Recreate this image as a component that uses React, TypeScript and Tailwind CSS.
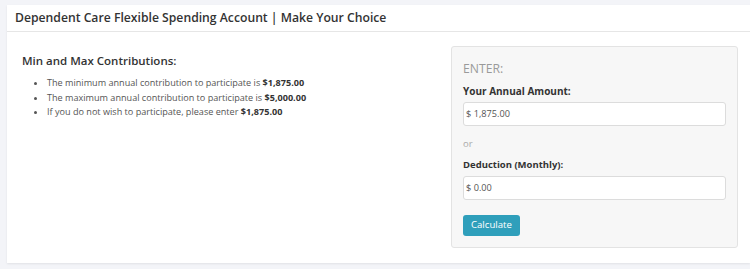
export default function App() {
  const rules = [
    { text: "The minimum annual contribution to participate is ", amount: "$1,875.00" },
    { text: "The maximum annual contribution to participate is ", amount: "$5,000.00" },
    { text: "If you do not wish to participate, please enter ", amount: "$1,875.00" },
  ];

  return (
    <div
      className="h-[269px] w-[750px] bg-[#f3f4f8] pl-[7px] pt-[5px] text-[#333]"
      style={{ fontFamily: '"Open Sans", "Liberation Sans", sans-serif' }}
    >
      <div className="h-[258px] bg-white shadow-[0_1px_2px_rgba(0,0,0,0.08)]">
        {/* header */}
        <div className="flex h-[27px] items-center border-b border-[#e6e6e6] pl-[8px]">
          <h1 className="text-[12.2px] font-semibold text-[#333]">
            Dependent Care Flexible Spending Account | Make Your Choice
          </h1>
        </div>

        <div className="flex pt-[14px]">
          {/* left column */}
          <div className="w-[444px] pl-[15px]">
            <h2 className="mt-[7px] text-[11.5px] font-semibold leading-[16px] text-[#333]">
              Min and Max Contributions:
            </h2>
            <ul className="mt-[7px] list-disc pl-[25px] text-[9.1px] leading-[14.5px] text-[#555]">
              {rules.map((r) => (
                <li key={r.amount + r.text}>
                  {r.text}
                  <span className="font-bold text-[#333]">{r.amount}</span>
                </li>
              ))}
            </ul>
          </div>

          {/* right panel */}
          <div className="h-[202px] w-[287px] rounded-[3px] border border-[#e3e3e3] bg-[#f7f7f7] px-[11px] pt-[13px]">
            <div className="text-[12.2px] leading-[18px] text-[#9a9a9a]">ENTER:</div>
            <label className="mt-[6px] block text-[10px] font-bold leading-[14px] text-[#333]">
              Your Annual Amount:
            </label>
            <div className="mt-[4px] flex h-[24px] items-center rounded-[3px] border border-[#dcdcdc] bg-white pl-[2px] text-[9.2px] text-[#555]">
              $ 1,875.00
            </div>
            <div className="mt-[11px] text-[9.5px] leading-[14px] text-[#aaa]">or</div>
            <label className="mt-[7px] block text-[9.5px] font-bold leading-[14px] text-[#333]">
              Deduction (Monthly):
            </label>
            <div className="mt-[4px] flex h-[24px] items-center rounded-[3px] border border-[#dcdcdc] bg-white pl-[2px] text-[9.2px] text-[#555]">
              $ 0.00
            </div>
            <button className="mt-[15px] h-[21px] rounded-[3px] bg-[#2f9fbb] px-[8px] text-[9.6px] text-white">
              Calculate
            </button>
          </div>
        </div>
      </div>
    </div>
  );
}
